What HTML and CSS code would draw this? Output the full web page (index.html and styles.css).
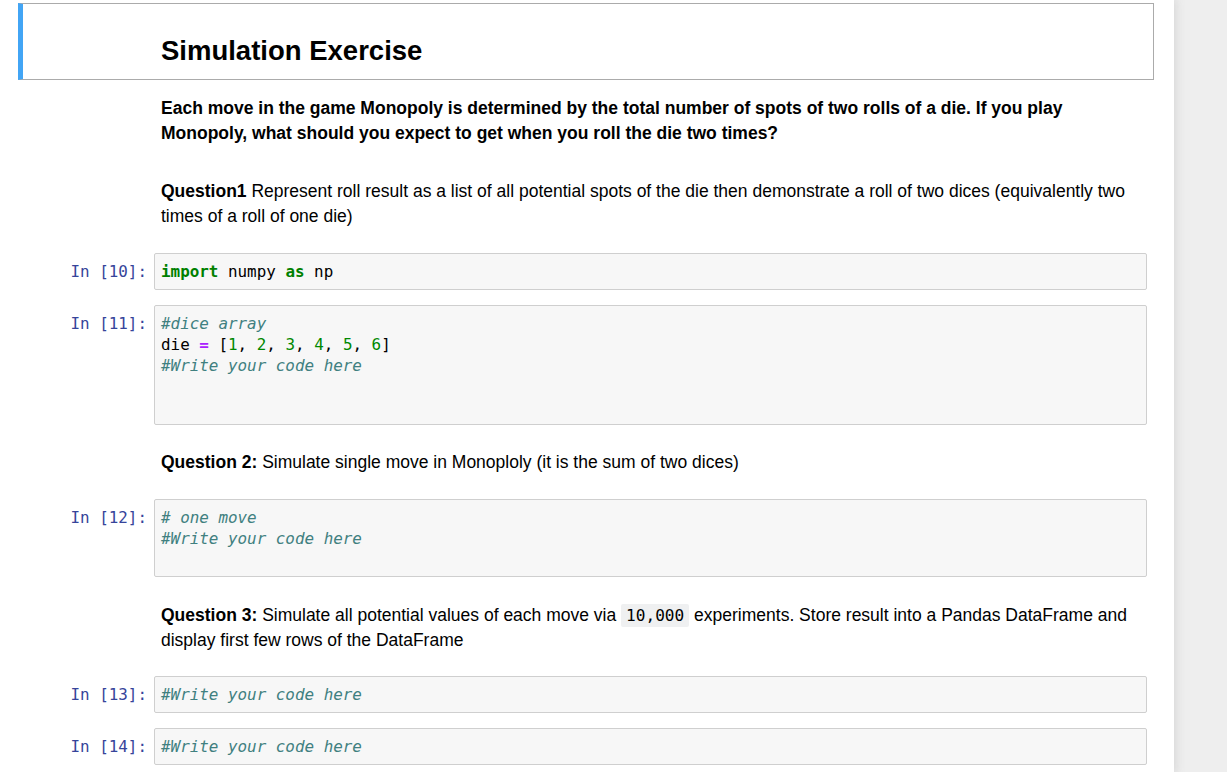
FILE: index.html
```html
<!DOCTYPE html>
<html>
<head>
<meta charset="utf-8">
<link rel="stylesheet" href="styles.css">
</head>
<body>
<div class="notebook">
  <div class="cell heading-cell">
    <div class="prompt"></div>
    <div class="md-area"><h2 class="title">Simulation Exercise</h2></div>
  </div>

  <div class="cell md-cell md-first">
    <div class="prompt"></div>
    <div class="md-area">
      <p class="para"><b>Each move in the game Monopoly is determined by the total number of spots of two rolls of a die. If you play Monopoly, what should you expect to get when you roll the die two times?</b></p>
      <p class="para para-gap"><b>Question1</b> Represent roll result as a list of all potential spots of the die then demonstrate a roll of two dices (equivalently two times of a roll of one die)</p>
    </div>
  </div>

  <div class="cell code-cell">
    <div class="prompt in">In&nbsp;[10]:</div>
    <div class="input-area">
      <div class="line"><span class="kw">import</span> numpy <span class="kw">as</span> np</div>
    </div>
  </div>

  <div class="cell code-cell">
    <div class="prompt in">In&nbsp;[11]:</div>
    <div class="input-area">
      <div class="line"><span class="cm">#dice array</span></div>
      <div class="line">die <span class="op">=</span> [<span class="nu">1</span>, <span class="nu">2</span>, <span class="nu">3</span>, <span class="nu">4</span>, <span class="nu">5</span>, <span class="nu">6</span>]</div>
      <div class="line"><span class="cm">#Write your code here</span></div>
      <div class="line"></div>
      <div class="line"></div>
    </div>
  </div>

  <div class="cell md-cell">
    <div class="prompt"></div>
    <div class="md-area">
      <p class="para"><b>Question 2:</b> Simulate single move in Monoploly (it is the sum of two dices)</p>
    </div>
  </div>

  <div class="cell code-cell">
    <div class="prompt in">In&nbsp;[12]:</div>
    <div class="input-area">
      <div class="line"><span class="cm"># one move</span></div>
      <div class="line"><span class="cm">#Write your code here</span></div>
      <div class="line"></div>
    </div>
  </div>

  <div class="cell md-cell">
    <div class="prompt"></div>
    <div class="md-area">
      <p class="para"><b>Question 3:</b> Simulate all potential values of each move via <code class="inline">10,000</code> experiments. Store result into a Pandas DataFrame and display first few rows of the DataFrame</p>
    </div>
  </div>

  <div class="cell code-cell">
    <div class="prompt in">In&nbsp;[13]:</div>
    <div class="input-area">
      <div class="line"><span class="cm">#Write your code here</span></div>
    </div>
  </div>

  <div class="cell code-cell">
    <div class="prompt in">In&nbsp;[14]:</div>
    <div class="input-area">
      <div class="line"><span class="cm">#Write your code here</span></div>
    </div>
  </div>
</div>
</body>
</html>
```

FILE: styles.css
```css
html, body {
  margin: 0;
  padding: 0;
}
body {
  background: #eeeeee;
  font-family: "Liberation Sans", Arial, sans-serif;
  color: #000;
  overflow: hidden;
  height: 772px;
}
.notebook {
  width: 1174px;
  min-height: 772px;
  background: #fff;
  box-shadow: 0 0 10px 1px rgba(87, 87, 87, 0.18);
  padding-top: 3px;
  box-sizing: border-box;
}
.cell {
  display: flex;
  margin-left: 18px;
  width: 1136px;
  box-sizing: border-box;
  padding-left: 5px;
  padding-right: 7px;
}
.prompt {
  flex: none;
  width: 131px;
  box-sizing: border-box;
}
.prompt.in {
  font-family: "DejaVu Sans Mono", "Liberation Mono", monospace;
  font-size: 15.9px;
  line-height: 20.75px;
  color: #36449a;
  text-align: right;
  padding-right: 7px;
  padding-top: 9px;
}
.heading-cell {
  border: 1px solid #ababab;
  border-left: 5px solid #42a5f5;
  padding-left: 0;
  height: 77px;
}
.title {
  margin: 0;
  padding-top: 31px;
  font-size: 27.5px;
  line-height: 32px;
  font-weight: bold;
}
.md-area {
  flex: 1;
  padding-left: 7px;
  font-size: 17.5px;
  line-height: 25px;
}
.md-cell {
  padding-top: 17.75px;
  padding-bottom: 15.75px;
}
.md-first {
  padding-top: 15.5px;
  padding-bottom: 16.5px;
}
.para {
  margin: 0;
}
.para-gap {
  margin-top: 33px;
}
.inline {
  font-family: "DejaVu Sans Mono", "Liberation Mono", monospace;
  font-size: 16.1px;
  background: #eff0f1;
  padding: 2px 5px;
  border-radius: 2px;
}
.code-cell {
  padding-top: 7.75px;
  padding-bottom: 7.75px;
}
.input-area {
  flex: 1;
  background: #f7f7f7;
  border: 1px solid #cfcfcf;
  border-radius: 2px;
  padding: 8px 6px 6px;
  font-family: "DejaVu Sans Mono", "Liberation Mono", monospace;
  font-size: 15.9px;
  line-height: 20.75px;
  color: #000;
}
.line {
  height: 20.75px;
  white-space: pre;
}
.kw {
  color: #008000;
  font-weight: bold;
}
.cm {
  color: #408080;
  font-style: italic;
}
.nu {
  color: #008800;
}
.op {
  color: #aa22ff;
  font-weight: bold;
}
```
